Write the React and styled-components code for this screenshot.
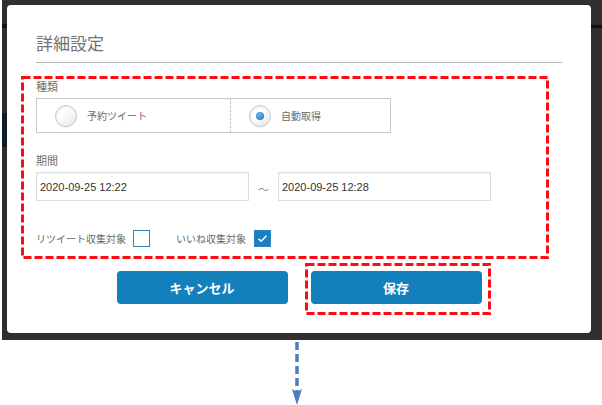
import React from "react";
import styled, { createGlobalStyle } from "styled-components";

const Global = createGlobalStyle`
  html, body { margin: 0; padding: 0; background: #ffffff; }
  body { font-family: "Liberation Sans", "Noto Sans CJK JP", sans-serif; }
  * { box-sizing: border-box; }
`;

const Stage = styled.div`
  width: 600px;
  height: 340px;
  margin-left: 2px;
  padding: 5px 11px 7px 5px;
  background:
    linear-gradient(to bottom, #2e2e2e 0 24px, #111 24px 28px, #2e2e2e 28px 113px, #0b1d2b 113px 147px, #2e2e2e 147px 100%) left top / 5px 100% no-repeat,
    linear-gradient(to bottom, transparent 0 25px, #111 25px 28px, transparent 28px) right top / 11px 100% no-repeat,
    #303030;
`;

const Modal = styled.div`
  width: 584px;
  height: 328px;
  background: #ffffff;
  border-radius: 4px;
  padding: 28px 29px 29px 29px;
  display: flex;
  flex-direction: column;
`;

const Title = styled.h2`
  margin: 0;
  font-family: "Noto Sans CJK JP", sans-serif;
  font-weight: 400;
  font-size: 17px;
  line-height: 20px;
  color: #727272;
  padding-bottom: 9px;
  border-bottom: 1px solid #b7b7b7;
`;

const FormSection = styled.div`
  position: relative;
  margin-top: 16px;
  display: flex;
  flex-direction: column;
`;

const Label = styled.div`
  font-family: "Noto Sans CJK JP", sans-serif;
  font-size: 11px;
  line-height: 14px;
  color: #707070;
  margin-top: ${(p) => p.$mt || 0}px;
`;

const RadioBox = styled.div`
  margin-top: 5px;
  width: 355px;
  height: 35px;
  border: 1px solid #c9c9c9;
  display: flex;
`;

const RadioOption = styled.label`
  display: flex;
  align-items: center;
  height: 100%;
  padding-left: ${(p) => p.$pl}px;
  width: ${(p) => (p.$w ? `${p.$w}px` : "auto")};
  flex: ${(p) => (p.$w ? "none" : 1)};
  border-left: ${(p) => (p.$divider ? "1px dotted #aaa" : "none")};
  gap: 10px;
  font-family: "Noto Sans CJK JP", sans-serif;
  font-size: 10px;
  color: #6a6a6a;
`;

const RadioCircle = styled.span`
  width: 22px;
  height: 22px;
  border-radius: 50%;
  border: 1px solid #c8c8c8;
  background: linear-gradient(135deg, #ffffff 35%, #e4e4e4 100%);
  box-shadow: inset 1px 1px 2px rgba(0, 0, 0, 0.08), 0 1px 1px rgba(0, 0, 0, 0.06);
  display: flex;
  align-items: center;
  justify-content: center;
  flex: none;
`;

const RadioDot = styled.span`
  width: 8px;
  height: 8px;
  border-radius: 50%;
  background: radial-gradient(circle at 40% 35%, #6db4ea 0%, #2c86cc 70%, #1f74b8 100%);
`;

const DateRow = styled.div`
  margin-top: 5px;
  display: flex;
  align-items: center;
`;

const DateInput = styled.div`
  width: 213px;
  height: 29px;
  border: 1px solid #dcdcdc;
  box-shadow: inset 0 1px 2px rgba(0, 0, 0, 0.05);
  padding-left: 3px;
  display: flex;
  align-items: center;
  font-family: "Liberation Sans", sans-serif;
  font-size: 11px;
  color: #333;
`;

const Tilde = styled.span`
  width: 29px;
  text-align: center;
  font-family: "Noto Sans CJK JP", sans-serif;
  font-size: 11px;
  color: #888;
  padding-top: 4px;
`;

const CheckRow = styled.div`
  margin-top: 29px;
  display: flex;
  align-items: center;
  height: 17px;
`;

const CheckLabel = styled.span`
  font-family: "Noto Sans CJK JP", sans-serif;
  font-size: 10px;
  color: #6a6a6a;
  margin-left: ${(p) => p.$ml || 0}px;
  margin-right: ${(p) => p.$mr}px;
`;

const CheckBox = styled.span`
  width: 17px;
  height: 17px;
  border: 1.5px solid #2a86c4;
  background: ${(p) => (p.$checked ? "#1b7fbe" : "#fff")};
  display: flex;
  align-items: center;
  justify-content: center;
`;

const ButtonRow = styled.div`
  position: relative;
  margin-top: 24px;
  display: flex;
  justify-content: center;
  gap: 23px;
`;

const ButtonWrap = styled.div`
  position: relative;
`;

const Button = styled.button`
  width: 171px;
  height: 33px;
  border: none;
  border-radius: 4px;
  background: #137fbb;
  color: #fff;
  font-family: "Noto Sans CJK JP", sans-serif;
  font-weight: 700;
  font-size: 13px;
  padding: 0;
`;

const Annotation = styled.svg`
  position: absolute;
  left: ${(p) => p.$l}px;
  top: ${(p) => p.$t}px;
  overflow: visible;
  pointer-events: none;
`;

const ArrowRow = styled.div`
  padding-left: 291px;
  padding-top: 2px;
`;

function DashedBox({ l, t, w, h }) {
  return (
    <Annotation $l={l} $t={t} width={w} height={h}>
      <rect
        x="1.5"
        y="1.5"
        width={w - 3}
        height={h - 3}
        fill="none"
        stroke="#ff0a12"
        strokeWidth="3"
        strokeDasharray="8 3"
      />
    </Annotation>
  );
}

function Check() {
  return (
    <svg width="11" height="9" viewBox="0 0 11 9">
      <polyline points="1.5,4.8 4.2,7.2 9.5,1.8" fill="none" stroke="#fff" strokeWidth="1.6" />
    </svg>
  );
}

export default function App() {
  return (
    <>
      <Global />
      <Stage>
        <Modal>
          <Title>詳細設定</Title>
          <FormSection>
            <DashedBox l={-15} t={-3} w={528} h={183} />
            <Label>種類</Label>
            <RadioBox>
              <RadioOption $w={193} $pl={18}>
                <RadioCircle />
                予約ツイート
              </RadioOption>
              <RadioOption $pl={18} $divider>
                <RadioCircle>
                  <RadioDot />
                </RadioCircle>
                自動取得
              </RadioOption>
            </RadioBox>
            <Label $mt={20}>期間</Label>
            <DateRow>
              <DateInput>2020-09-25 12:22</DateInput>
              <Tilde>～</Tilde>
              <DateInput>2020-09-25 12:28</DateInput>
            </DateRow>
            <CheckRow>
              <CheckLabel $mr={7}>リツイート収集対象</CheckLabel>
              <CheckBox />
              <CheckLabel $ml={26} $mr={8}>いいね収集対象</CheckLabel>
              <CheckBox $checked>
                <Check />
              </CheckBox>
            </CheckRow>
          </FormSection>
          <ButtonRow>
            <Button>キャンセル</Button>
            <ButtonWrap>
              <Button>保存</Button>
              <DashedBox l={-6} t={-8} w={186} h={52} />
            </ButtonWrap>
          </ButtonRow>
        </Modal>
      </Stage>
      <ArrowRow>
        <svg width="12" height="64" viewBox="0 0 12 64">
          <line x1="6" y1="0" x2="6" y2="50" stroke="#4d7cbf" strokeWidth="3.5" strokeDasharray="8 4" />
          <polygon points="1,47 6,50 11,47 6,63" fill="#4d7cbf" />
        </svg>
      </ArrowRow>
    </>
  );
}
